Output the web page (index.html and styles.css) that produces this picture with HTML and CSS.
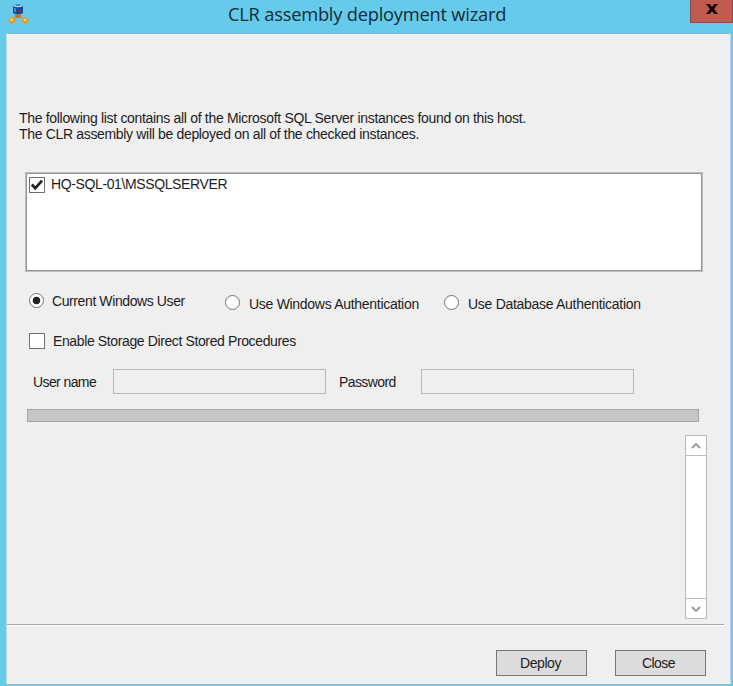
FILE: index.html
```html
<!DOCTYPE html>
<html lang="en">
<head>
<meta charset="utf-8">
<title>CLR assembly deployment wizard</title>
<link rel="stylesheet" href="styles.css">
</head>
<body>
<div class="window">
  <header class="titlebar">
    <svg class="app-icon" width="22" height="22" viewBox="0 0 22 22">
      <path d="M5 15 10 11 16 15" fill="none" stroke="#c3a06c" stroke-width="2"/>
      <path d="M5 1.500Q10 -.5 15 1.500V9Q10 12 5 9Z" fill="#174a91"/>
      <path d="M5.500 1.500Q10 3.500 14.500 1.500" fill="none" stroke="#b6d8ee" stroke-width="1.500"/>
      <path d="M7 4v4" stroke="#3b8bd6" stroke-width="2"/>
      <path d="M10 6.500 14 4.500V8L11 9.500Z" fill="#753650"/>
      <ellipse cx="10" cy="12" rx="3" ry="2" fill="#b9792b"/>
      <circle cx="4" cy="16.500" r="3.300" fill="#dc9c2e"/>
      <circle cx="17.200" cy="16.500" r="3.300" fill="#dc9c2e"/>
      <circle cx="3.700" cy="15.800" r="1.400" fill="#ffdc87"/>
      <circle cx="16.900" cy="15.800" r="1.400" fill="#ffdc87"/>
    </svg>
    <h1 class="title">CLR assembly deployment wizard</h1>
    <button class="close-x" aria-label="Close window"><svg width="12" height="10" viewBox="0 0 12 10"><path d="M0 0H3.800L6 3 8.200 0H12L8 5 12 10H8.200L6 7 3.800 10H0L4 5Z" fill="#0b0706"/></svg></button>
  </header>
  <main class="client">
    <p class="intro"><span class="intro-a">The following list contains all of the Microsoft SQL Server instances found on this host.</span><br><span class="intro-b">The CLR assembly will be deployed on all of the checked instances.</span></p>
    <div class="list">
      <span class="check"><svg width="14" height="14" viewBox="0 0 14 14"><path d="M1.800 6.500 5.300 10.200 12 2.700" fill="none" stroke="#222" stroke-width="2.700"/></svg></span>
      <span class="instance">HQ-SQL-01\MSSQLSERVER</span>
    </div>
    <div class="auth">
      <label class="option current"><span class="radio on"></span><span class="t-current">Current Windows User</span></label>
      <label class="option windows"><span class="radio"></span><span class="t-windows">Use Windows Authentication</span></label>
      <label class="option database"><span class="radio"></span><span class="t-database">Use Database Authentication</span></label>
    </div>
    <label class="storage"><span class="check"></span><span class="t-storage">Enable Storage Direct Stored Procedures</span></label>
    <div class="credentials">
      <span class="user-label">User name</span><span class="field"></span>
      <span class="password-label">Password</span><span class="field"></span>
    </div>
    <div class="progress"></div>
    <div class="log">
      <div class="scrollbar">
        <span class="arrow up"><svg width="10" height="6" viewBox="0 0 10 6"><path d="M1 5 5 1 9 5" fill="none" stroke="#999" stroke-width="1.800"/></svg></span>
        <span class="arrow down"><svg width="10" height="6" viewBox="0 0 10 6"><path d="M1 1 5 5 9 1" fill="none" stroke="#999" stroke-width="1.800"/></svg></span>
      </div>
    </div>
    <footer class="footer">
      <button class="btn deploy">Deploy</button>
      <button class="btn close">Close</button>
    </footer>
  </main>
</div>
</body>
</html>
```
FILE: styles.css
```css
* { box-sizing: border-box; }
body { margin: 0; }
.window {
  width: 733px;
  height: 686px;
  padding: 0 2px 1px 6px;
  background: #66caea;
  overflow: hidden;
  color: #1c1c22;
  font: 14px/16px "Liberation Sans", Arial, sans-serif;
  white-space: nowrap;
}
.titlebar { display: flex; height: 33px; }
.app-icon { margin: 4px 0 0 2px; flex: none; }
.title {
  margin: 2px 0 0 198px;
  width: 462px;
  flex: none;
  font: 18.3px/24px "Open Sans", sans-serif;
  letter-spacing: -0.22px;
  color: #122b38;
}
.close-x {
  flex: none;
  width: 43px;
  height: 23px;
  padding: 0 0 4px;
  border: 1px solid #884b4b;
  border-top: 0;
  background: #c35a50;
  display: flex;
  align-items: center;
  justify-content: center;
}
.client {
  height: 652px;
  background: #efefef;
  border: 1px solid #b9d9e4;
  border-top-color: #8cb6c8;
  border-bottom-color: #8dbccc;
  display: flow-root;
}
.intro { margin: 76px 0 0 12px; height: 32px; }
.intro-a { letter-spacing: -0.315px; }
.intro-b { letter-spacing: -0.33px; }
.list {
  margin: 30px 0 0 18px;
  width: 678px;
  height: 100px;
  border: 1px solid #bcbdc1;
  box-shadow: inset 0 0 0 1px #93959b;
  background: #fff;
  display: flex;
  padding: 4px 3px;
}
.check {
  width: 16px;
  height: 16px;
  flex: none;
  background: #fff;
  border: 1px solid #707070;
}
.check svg { display: block; }
.instance { margin: -1px 0 0 6px; letter-spacing: -0.38px; }
.auth { display: flex; height: 22px; margin: 21px 0 0 22px; }
.option { display: flex; align-items: flex-start; }
.radio {
  width: 15px;
  height: 15px;
  flex: none;
  border: 1px solid #737373;
  border-radius: 50%;
  background: #fff;
}
.radio.on { background: radial-gradient(circle, #222 3.4px, #fff 4.2px); }
.current { width: 196px; }
.windows, .database { padding-top: 2px; }
.windows { width: 219px; }
.option .t-current { margin-left: 8px; letter-spacing: -0.4px; }
.option .t-windows, .option .t-database { margin: 1px 0 0 9px; letter-spacing: -0.29px; }
.storage { display: flex; height: 17px; margin: 18px 0 0 22px; }
.t-storage { margin-left: 8px; letter-spacing: -0.38px; }
.credentials { display: flex; align-items: center; height: 25px; margin: 19px 0 0 26px; }
.field { width: 213px; height: 25px; border: 1px solid #b8b8b8; flex: none; }
.user-label { width: 80px; letter-spacing: -0.6px; }
.password-label { width: 82px; margin-left: 13px; letter-spacing: -0.6px; }
.progress { width: 672px; height: 13px; margin: 15px 0 0 20px; background: #c6c6c6; border: 1px solid #a5a5a5; }
.log { display: flex; justify-content: flex-end; height: 184px; margin: 13px 23px 0 0; }
.scrollbar {
  width: 22px;
  background: #fff;
  border: 1px solid #bdbdbd;
  display: flex;
  flex-direction: column;
  justify-content: space-between;
}
.arrow { height: 20px; display: flex; align-items: center; justify-content: center; }
.up { border-bottom: 1px solid #bdbdbd; }
.down { border-top: 1px solid #bdbdbd; }
.footer {
  width: 717px;
  height: 53px;
  margin-top: 5px;
  padding: 25px 18px 0 0;
  border-top: 1px solid #a5a5a5;
  box-shadow: inset 0 1px #fff;
  display: flex;
  justify-content: flex-end;
  gap: 28px;
}
.btn {
  width: 91px;
  height: 26px;
  padding: 0 2px 0 0;
  border: 1px solid #777;
  background: #dcdcdc;
  color: inherit;
  font: inherit;
  letter-spacing: -0.45px;
}
.close { padding-right: 4px; letter-spacing: -0.6px; }
```
